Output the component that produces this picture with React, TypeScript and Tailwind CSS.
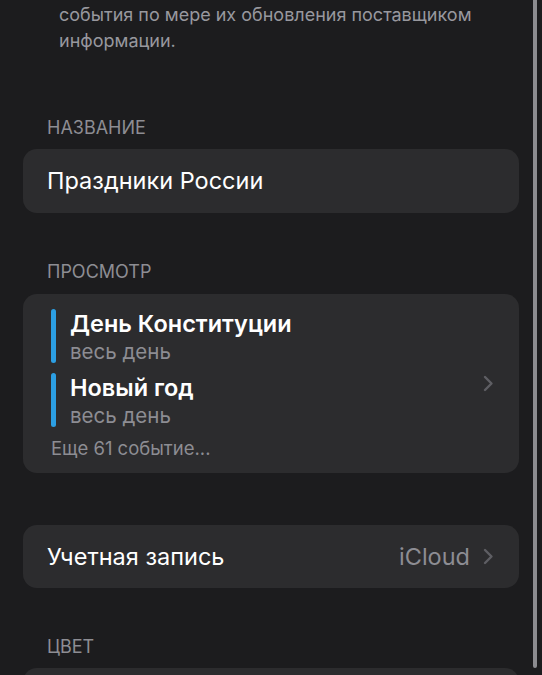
import React from 'react';

const font = { fontFamily: 'Inter, "Noto Sans", sans-serif' };

function Chevron() {
    return (
        <svg width="11" height="17" viewBox="0 0 11 17" fill="none">
            <path d="M2 2l6.5 6.5L2 15" stroke="#5e5e63" strokeWidth="2.4" strokeLinecap="round" strokeLinejoin="round"/>
        </svg>
    );
}

function SectionLabel({children}: {children: React.ReactNode}) {
    return <div className="px-[47px] text-[18px] leading-[20px] text-[#8d8d93]">{children}</div>;
}

function EventRow({title}: {title: string}) {
    return (
        <div className="flex gap-[14px] h-[56px]">
            <div className="w-[5px] h-[54px] rounded-full bg-[#2c9fe3]"/>
            <div className="flex flex-col">
                <div className="text-[23.5px] leading-[29px] font-semibold text-white">{title}</div>
                <div className="text-[20.5px] leading-[27px] text-[#8d8d93]">весь день</div>
            </div>
        </div>
    );
}

export default function App() {
    return (
        <div className="relative w-[542px] h-[675px] overflow-hidden bg-[#1c1c1e]" style={font}>
            <div className="pt-[2px] pl-[59px] pr-[40px] text-[18px] leading-[26px] text-[#98989e]">
                <div>события по мере их обновления поставщиком</div>
                <div>информации.</div>
            </div>

            <div className="mt-[64px]">
                <SectionLabel>НАЗВАНИЕ</SectionLabel>
            </div>
            <div className="mx-[23px] mt-[11px] h-[64px] rounded-[14px] bg-[#2c2c2e] flex items-center px-[24px]">
                <span className="text-[23.5px] text-white">Праздники России</span>
            </div>

            <div className="mt-[49px]">
                <SectionLabel>ПРОСМОТР</SectionLabel>
            </div>
            <div className="mx-[23px] mt-[12px] h-[179px] rounded-[14px] bg-[#2c2c2e] flex items-center pl-[28px] pr-[25px]">
                <div className="flex-1 flex flex-col pt-[15px] self-stretch">
                    <div className="flex flex-col gap-[8px]">
                        <EventRow title="День Конституции"/>
                        <EventRow title="Новый год"/>
                    </div>
                    <div className="mt-[9px] text-[18.5px] leading-[20px] text-[#8d8d93]">Еще 61 событие...</div>
                </div>
                <Chevron/>
            </div>

            <div className="mx-[23px] mt-[52px] h-[63px] rounded-[14px] bg-[#2c2c2e] flex items-center pl-[24px] pr-[25px]">
                <span className="flex-1 text-[23.5px] text-white">Учетная запись</span>
                <span className="text-[23.5px] text-[#8d8d93] mr-[13px]">iCloud</span>
                <Chevron/>
            </div>

            <div className="mt-[49px]">
                <SectionLabel>ЦВЕТ</SectionLabel>
            </div>
            <div className="mx-[23px] mt-[11px] h-[64px] rounded-[14px] bg-[#2c2c2e]"/>

            <div className="absolute right-[5px] top-0 w-[4px] h-[668px] rounded-b-full bg-[#8c8c90]"/>
        </div>
    );
}
